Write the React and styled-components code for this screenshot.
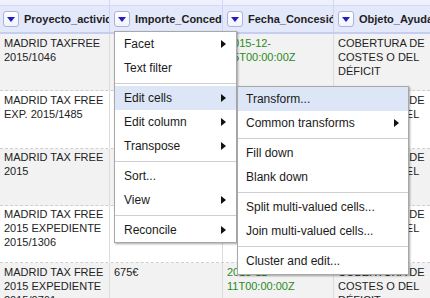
import { createGlobalStyle, styled } from "styled-components";

const GlobalStyle = createGlobalStyle`
  html, body {
    margin: 0;
    padding: 0;
    background: #fff;
    font-family: "Liberation Sans", Arial, sans-serif;
    overflow: hidden;
  }
`;

const columns = ["Proyecto_actividad", "Importe_Concedido", "Fecha_Concesión", "Objeto_Ayuda"];

const rows = [
  ["MADRID TAXFREE 2015/1046", "", "2015-12-|15T00:00:00Z", "COBERTURA DE COSTES O DEL DÉFICIT"],
  ["MADRID TAX FREE EXP. 2015/1485", "", "2015-12-|15T00:00:00Z", "COBERTURA DE COSTES O DEL DÉFICIT"],
  ["MADRID TAX FREE 2015", "", "2015-12-|15T00:00:00Z", "COBERTURA DE COSTES O DEL DÉFICIT"],
  ["MADRID TAX FREE 2015 EXPEDIENTE 2015/1306", "", "2015-12-|15T00:00:00Z", "COBERTURA DE COSTES O DEL DÉFICIT"],
  ["MADRID TAX FREE 2015 EXPEDIENTE 2015/0761", "675€", "2015-12-|11T00:00:00Z", "COBERTURA DE COSTES O DEL DÉFICIT"],
];

const mainMenu = [
  { label: "Facet", sub: true },
  { label: "Text filter" },
  "sep",
  { label: "Edit cells", sub: true, active: true },
  { label: "Edit column", sub: true },
  { label: "Transpose", sub: true },
  "sep",
  { label: "Sort..." },
  { label: "View", sub: true },
  "sep",
  { label: "Reconcile", sub: true },
];

const editCellsMenu = [
  { label: "Transform...", active: true },
  { label: "Common transforms", sub: true },
  "sep",
  { label: "Fill down" },
  { label: "Blank down" },
  "sep",
  { label: "Split multi-valued cells..." },
  { label: "Join multi-valued cells..." },
  "sep",
  { label: "Cluster and edit..." },
];

const GRID = "109px 113px 111px 1fr";

export default function App() {
  return (
    <Page>
      <GlobalStyle />
      <Table>
        <TopStrip>
          {columns.map((c) => (
            <StripCell key={c} />
          ))}
        </TopStrip>
        <HeaderRow>
          {columns.map((c) => (
            <HeaderCell key={c}>
              <DropButton>
                <DownTriangle />
              </DropButton>
              <HeaderLabel>{c}</HeaderLabel>
            </HeaderCell>
          ))}
        </HeaderRow>
        {rows.map((r, i) => (
          <DataRow key={i} $odd={i % 2 === 0}>
            {r.map((v, j) => (
              <Cell key={j} $date={j === 2}>
                {j === 2
                  ? v.split("|").map((part, k) => (
                      <span key={k}>
                        {part}
                        {k === 0 && <wbr />}
                      </span>
                    ))
                  : v}
              </Cell>
            ))}
          </DataRow>
        ))}
      </Table>

      <Menu $left={114} $top={31} $width={123}>
        {mainMenu.map((item, i) =>
          item === "sep" ? (
            <Separator key={i} />
          ) : (
            <MenuItem key={i} $active={item.active} $pad={9}>
              {item.label}
              {item.sub && <RightArrow $right={10} />}
            </MenuItem>
          )
        )}
      </Menu>

      <Menu $left={237} $top={86} $width={172} $bottomPad={1}>
        {editCellsMenu.map((item, i) =>
          item === "sep" ? (
            <Separator key={i} />
          ) : (
            <MenuItem key={i} $active={item.active} $pad={8}>
              {item.label}
              {item.sub && <RightArrow $right={9} />}
            </MenuItem>
          )
        )}
      </Menu>
    </Page>
  );
}

const Page = styled.div`
  position: relative;
  width: 430px;
  height: 298px;
  overflow: hidden;
`;

const Table = styled.div`
  display: flex;
  flex-direction: column;
  width: 430px;
`;

const TopStrip = styled.div`
  display: grid;
  grid-template-columns: ${GRID};
  height: 5px;
  background: #eef1fb;
  border-bottom: 1px solid #d3daf2;
`;

const StripCell = styled.div`
  border-left: 1px solid #d3daf2;
  &:first-child {
    border-left: none;
  }
`;

const HeaderRow = styled.div`
  display: grid;
  grid-template-columns: ${GRID};
  height: 26px;
  background: #e3e8fa;
  border-bottom: 2px solid #c5cef0;
`;

const HeaderCell = styled.div`
  display: flex;
  align-items: center;
  gap: 5px;
  padding-left: 4px;
  border-left: 1px solid #cdd5f2;
  overflow: hidden;
  white-space: nowrap;
  &:first-child {
    border-left: none;
    padding-left: 3px;
  }
`;

const DropButton = styled.div`
  flex: none;
  width: 14px;
  height: 14px;
  border: 1px solid #a9b3de;
  border-radius: 3px;
  background: linear-gradient(#ffffff, #f1f3fb);
  display: flex;
  align-items: center;
  justify-content: center;
`;

const DownTriangle = styled.div`
  width: 0;
  height: 0;
  margin-top: 1px;
  border-left: 4px solid transparent;
  border-right: 4px solid transparent;
  border-top: 5px solid #1f1fbf;
`;

const HeaderLabel = styled.span`
  font-size: 11px;
  font-weight: bold;
  color: #1e1e1e;
`;

const DataRow = styled.div`
  flex: none;
  display: grid;
  grid-template-columns: ${GRID};
  height: 56.25px;
  border-bottom: 1px dashed #cfcfcf;
  background: ${(p) => (p.$odd ? "#f2f2f2" : "#ffffff")};
`;

const Cell = styled.div`
  padding: 1.5px 4px 0 4px;
  font-size: 11px;
  line-height: 14px;
  color: ${(p) => (p.$date ? "#2a8a22" : "#222")};
  border-left: 1px solid #dcdcdc;
  overflow: hidden;
  &:first-child {
    border-left: none;
  }
`;

const Menu = styled.div`
  position: absolute;
  z-index: 10;
  left: ${(p) => p.$left}px;
  top: ${(p) => p.$top}px;
  width: ${(p) => p.$width}px;
  box-sizing: border-box;
  padding-bottom: ${(p) => p.$bottomPad || 0}px;
  background: #fff;
  border: 1px solid #a8a8a8;
  box-shadow: 1px 1px 2px rgba(0, 0, 0, 0.35);
  display: flex;
  flex-direction: column;
`;

const MenuItem = styled.div`
  position: relative;
  flex: none;
  height: 24px;
  line-height: 24px;
  padding-left: ${(p) => p.$pad}px;
  font-size: 12px;
  color: #1a1a1a;
  white-space: nowrap;
  background: ${(p) => (p.$active ? "#dce6f6" : "transparent")};
`;

const RightArrow = styled.span`
  position: absolute;
  right: ${(p) => p.$right}px;
  top: 8px;
  width: 0;
  height: 0;
  border-top: 4px solid transparent;
  border-bottom: 4px solid transparent;
  border-left: 5px solid #111;
`;

const Separator = styled.div`
  flex: none;
  height: 1px;
  margin: 3px 0 2px;
  background: #cfcfcf;
`;
